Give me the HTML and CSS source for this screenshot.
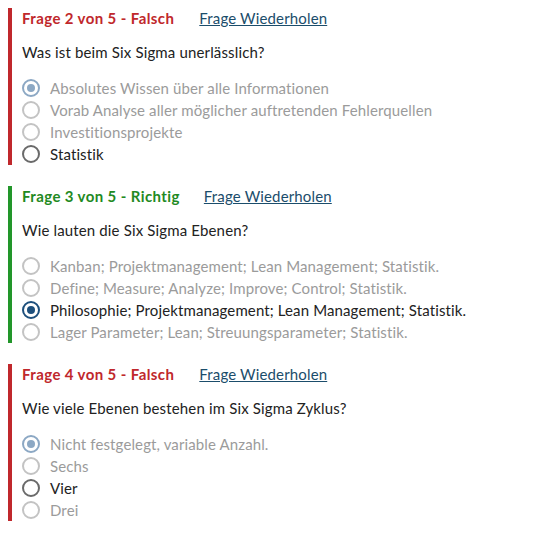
FILE: index.html
```html
<!DOCTYPE html>
<html lang="de">
<head>
<meta charset="utf-8">
<link rel="stylesheet" href="styles.css">
</head>
<body>
<section class="q wrong">
  <div class="head"><span class="status">Frage 2 von 5 - Falsch</span><a class="repeat" href="#">Frage Wiederholen</a></div>
  <p class="question">Was ist beim Six Sigma unerlässlich?</p>
  <ul class="opts">
    <li class="dis"><span class="radio sel"></span>Absolutes Wissen über alle Informationen</li>
    <li class="dis"><span class="radio"></span>Vorab Analyse aller möglicher auftretenden Fehlerquellen</li>
    <li class="dis"><span class="radio"></span>Investitionsprojekte</li>
    <li><span class="radio"></span>Statistik</li>
  </ul>
</section>
<section class="q right">
  <div class="head"><span class="status">Frage 3 von 5 - Richtig</span><a class="repeat" href="#">Frage Wiederholen</a></div>
  <p class="question">Wie lauten die Six Sigma Ebenen?</p>
  <ul class="opts">
    <li class="dis"><span class="radio"></span>Kanban; Projektmanagement; Lean Management; Statistik.</li>
    <li class="dis"><span class="radio"></span>Define; Measure; Analyze; Improve; Control; Statistik.</li>
    <li><span class="radio on"></span>Philosophie; Projektmanagement; Lean Management; Statistik.</li>
    <li class="dis"><span class="radio"></span>Lager Parameter; Lean; Streuungsparameter; Statistik.</li>
  </ul>
</section>
<section class="q wrong">
  <div class="head"><span class="status">Frage 4 von 5 - Falsch</span><a class="repeat" href="#">Frage Wiederholen</a></div>
  <p class="question">Wie viele Ebenen bestehen im Six Sigma Zyklus?</p>
  <ul class="opts">
    <li class="dis"><span class="radio sel"></span>Nicht festgelegt, variable Anzahl.</li>
    <li class="dis"><span class="radio"></span>Sechs</li>
    <li><span class="radio"></span>Vier</li>
    <li class="dis"><span class="radio"></span>Drei</li>
  </ul>
</section>
</body>
</html>
```
FILE: styles.css
```css
html, body { background: #fff; }
body {
  margin: 8px;
  font-family: "Lato", "Open Sans", sans-serif;
  font-size: 15px;
  color: #222;
}
.q {
  border-left: 4px solid #c0282c;
  padding-left: 10px;
  margin-bottom: 21px;
}
.q.right { border-left-color: #22962a; }
.head {
  display: flex;
  align-items: center;
  height: 20px;
  gap: 25px;
}
.status { font-weight: 700; color: #c0282c; letter-spacing: 0.4px; }
.right .status { color: #1f8a23; }
.right .head { gap: 24px; }
.repeat { color: #1b4d6b; text-decoration: underline; letter-spacing: 0.15px; }
.question {
  margin: 14px 0 15px;
  line-height: 20px;
  letter-spacing: 0.15px;
}
.opts { list-style: none; margin: 0; padding: 0; }
.opts li {
  display: flex;
  align-items: center;
  height: 22px;
  gap: 10px;
  letter-spacing: 0.12px;
}
.opts li.dis { color: #9b9b9b; }
.radio {
  box-sizing: border-box;
  width: 18px;
  height: 18px;
  border-radius: 50%;
  border: 2px solid #6a6a6a;
  display: flex;
  align-items: center;
  justify-content: center;
  flex: none;
}
.dis .radio { border-color: #c3c3c3; }
.dis .radio.sel { border-color: #8ca8c4; }
.radio.sel::after, .radio.on::after {
  content: "";
  width: 8px;
  height: 8px;
  border-radius: 50%;
  background: #8ca8c4;
}
.radio.on { border-color: #1d4f7c; }
.radio.on::after { background: #1d4f7c; }
```
